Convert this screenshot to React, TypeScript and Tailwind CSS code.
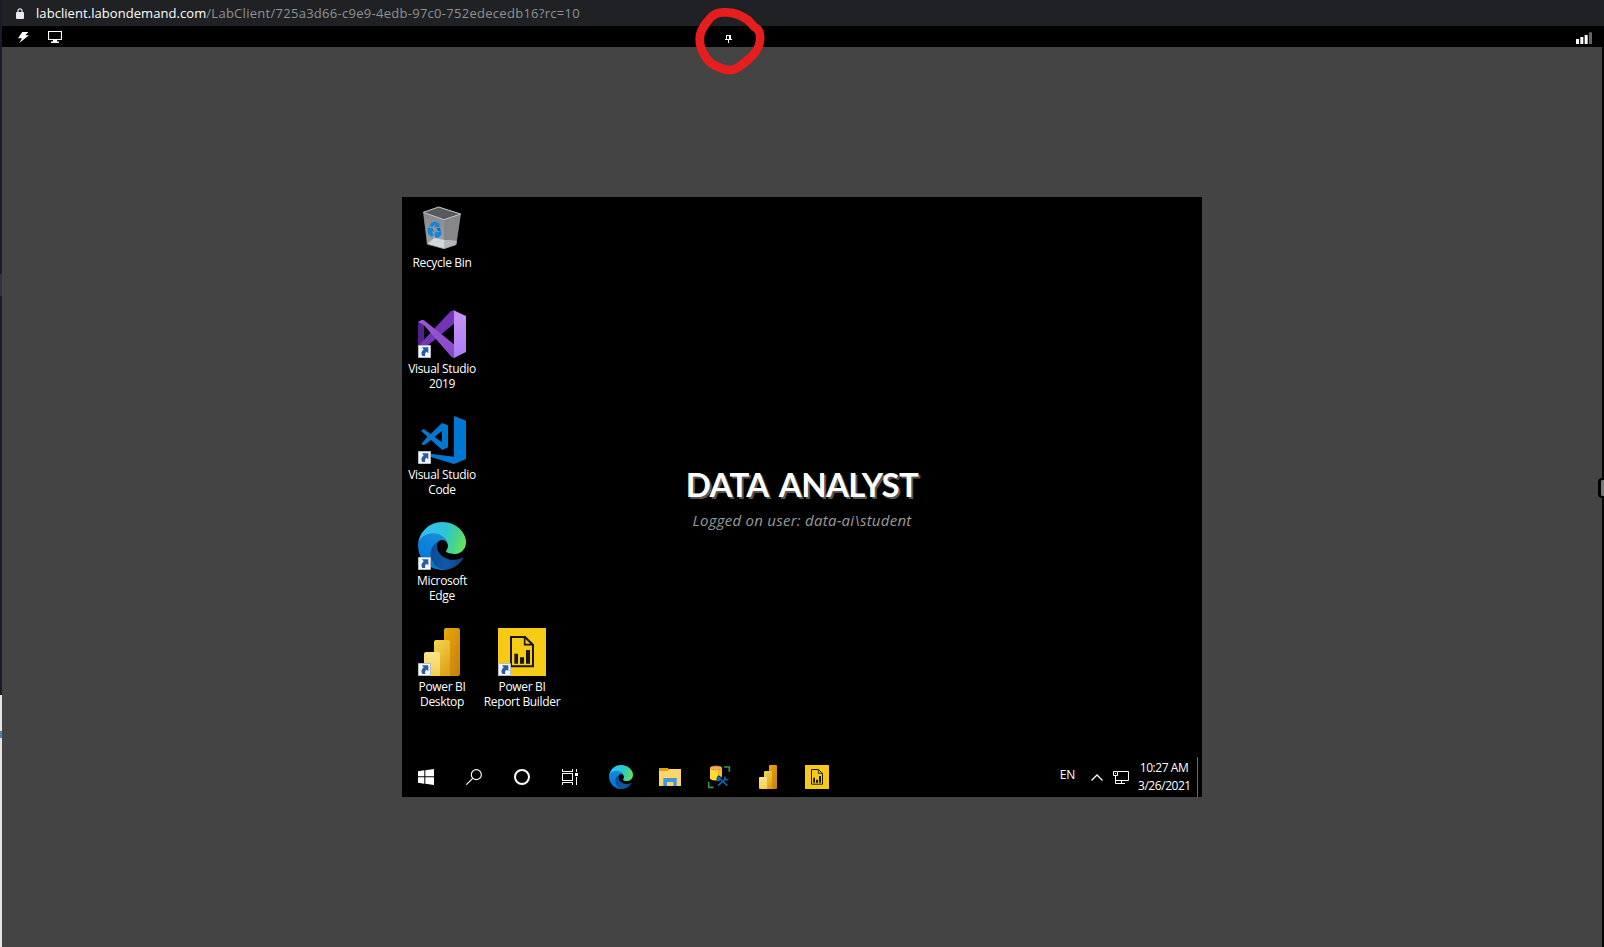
import type { ReactNode } from "react";

function EdgeLogo({ className }: { className: string }) {
  return (
    <svg viewBox="0 0 256 256" className={className}>
      <defs>
        <linearGradient id="edgeNavy" x1="63" y1="177" x2="241" y2="177" gradientUnits="userSpaceOnUse">
          <stop offset="0" stopColor="#0b4a94" />
          <stop offset="0.5" stopColor="#0f59a6" />
          <stop offset="1" stopColor="#163f7c" />
        </linearGradient>
        <linearGradient id="edgeBlue" x1="110" y1="60" x2="50" y2="220" gradientUnits="userSpaceOnUse">
          <stop offset="0" stopColor="#1b8fd2" />
          <stop offset="0.3" stopColor="#1384da" />
          <stop offset="1" stopColor="#0078d7" />
        </linearGradient>
        <linearGradient id="edgeGreen" x1="15" y1="60" x2="245" y2="135" gradientUnits="userSpaceOnUse">
          <stop offset="0" stopColor="#37bdf8" />
          <stop offset="0.5" stopColor="#2cc6d3" />
          <stop offset="0.78" stopColor="#46d48a" />
          <stop offset="1" stopColor="#68e456" />
        </linearGradient>
      </defs>
      <path fill="url(#edgeNavy)" d="M235.68 190.52a93.73 93.73 0 01-10.54 4.71 101.87 101.87 0 01-35.9 6.46c-47.32 0-88.54-32.55-88.54-74.32A31.48 31.48 0 01117.13 100c-42.8 1.8-53.8 46.4-53.8 72.53 0 73.88 68.09 81.37 82.76 81.37 7.91 0 19.84-2.3 27-4.56l1.31-.44a128.34 128.34 0 0066.6-52.8 4 4 0 00-5.32-5.58z" />
      <path fill="url(#edgeBlue)" d="M105.73 241.42a79.2 79.2 0 01-22.74-21.34 80.72 80.72 0 0129.53-120c3.12-1.47 8.45-4.13 15.54-4a32.35 32.35 0 0125.69 13 31.88 31.88 0 016.36 18.66c0-.21 24.46-79.6-80-79.6-43.9 0-80 41.66-80 78.21a130.15 130.15 0 0012.11 56 128 128 0 00156.38 67.11 75.55 75.55 0 01-62.78-8z" />
      <path fill="url(#edgeGreen)" d="M152.33 148.86c-.81 1.05-3.3 2.5-3.3 5.66 0 2.61 1.7 5.12 4.72 7.23 14.38 10 41.49 8.68 41.56 8.68a59.56 59.56 0 0030.27-8.35A61.38 61.38 0 00256 109.19c.26-22.41-8-37.31-11.34-43.91C223.46 23.84 177.72 0 128 0A128 128 0 000 126.2c.48-36.54 36.8-66.05 80-66.05 3.5 0 23.46.34 42 10.07 16.34 8.58 24.9 18.94 30.85 29.21 6.18 10.67 7.28 24.15 7.28 29.52s-2.74 13.33-7.8 19.91z" />
    </svg>
  );
}

function RecycleBin() {
  return (
    <svg viewBox="0 0 144 144" className="size-12">
      <defs>
        <linearGradient id="binLeft" x1="0" y1="0" x2="0" y2="1">
          <stop offset="0" stopColor="#85878b" />
          <stop offset="1" stopColor="#a3a5aa" />
        </linearGradient>
      </defs>
      <path d="M16 25 78 47 78 134 28 121Z" fill="url(#binLeft)" />
      <path d="M128 30 78 47 78 134 114 122Z" fill="#85878b" />
      <path d="M16 25 62 9 128 30 78 47Z" fill="#58595b" />
      <path d="M28 119 50 101 78 108 116 112 114 122 78 134Z" fill="#d3d6dc" />
      <path d="M78 108 116 110 114 122 78 134Z" fill="#b4b7bc" />
      <path d="M16 25 62 9 128 30 78 47Z" fill="none" stroke="#c9cacc" strokeWidth="3" />
      <path d="M17 28 28 121 78 134 114 122 127 32" fill="none" stroke="#8e9094" strokeWidth="2" />
      <g fill="#0f85dc">
        <path d="M40 56 52 52 65 59 65 70 53 70 48 62 44 69 34 66Z" />
        <path d="M29 71 44 73 49 83 42 82 47 95 39 98 29 87Z" />
        <path d="M49 88 57 81 57 85 69 83 70 92 61 101 53 101Z" />
        <path d="M55 72 66 72 69 83 60 81Z" fill="#0a6fc4" />
      </g>
    </svg>
  );
}

function VisualStudio() {
  return (
    <svg viewBox="0 0 144 144" className="size-12">
      <defs>
        <linearGradient id="vsPanel" x1="0" y1="0" x2="0" y2="1">
          <stop offset="0" stopColor="#c793f6" />
          <stop offset="1" stopColor="#ae7cf5" />
        </linearGradient>
        <linearGradient id="vsBand" x1="0" y1="0" x2="1" y2="1">
          <stop offset="0" stopColor="#9a59d8" />
          <stop offset="1" stopColor="#8748c8" />
        </linearGradient>
      </defs>
      <path d="M0 35 18 44 18 100 4 112 0 108Z" fill="#52218f" />
      <path d="M6 114 20 114 108 41 108 0 98 4 8 100Z" fill="#7534b5" />
      <path d="M0 35 11 30Q16 29 20 32L108 103 108 144Q102 143 98 138L18 46Z" fill="url(#vsBand)" />
      <path d="M105 0 144 18 144 126 108 144 108 3Z" fill="url(#vsPanel)" />
    </svg>
  );
}

function VsCode() {
  return (
    <svg viewBox="0 0 144 144" className="size-12" fill="#0078d2">
      <path d="M108 0 144 14 144 129 108 144 36 122 36 113 108 122Z" />
      <path fillRule="evenodd" d="M9 44 17 39 38 54 72 21 90 28 90 94 73 102 39 72 18 88 10 84 28 62ZM72 45 49 62 72 79Z" />
    </svg>
  );
}

function PowerBi({ className }: { className: string }) {
  return (
    <svg viewBox="0 0 144 144" className={className}>
      <defs>
        <linearGradient id="pbBack" x1="0" y1="0" x2="1" y2="1">
          <stop offset="0" stopColor="#e8a90c" />
          <stop offset="1" stopColor="#c67e0b" />
        </linearGradient>
        <linearGradient id="pbMid" x1="0" y1="0" x2="0.5" y2="1">
          <stop offset="0" stopColor="#f6d751" />
          <stop offset="1" stopColor="#dfa41b" />
        </linearGradient>
        <linearGradient id="pbFront" x1="0" y1="0" x2="0" y2="1">
          <stop offset="0" stopColor="#fae58a" />
          <stop offset="1" stopColor="#f2cf55" />
        </linearGradient>
      </defs>
      <rect x="78" y="0" width="48" height="144" rx="6" fill="url(#pbBack)" />
      <path d="M48 42q0-6 6-6h36q6 0 6 6v102H48Z" fill="url(#pbMid)" />
      <path d="M18 78q0-6 6-6h36q6 0 6 6v66H24q-6 0-6-6Z" fill="url(#pbFront)" />
    </svg>
  );
}

function ReportBuilder({ className }: { className: string }) {
  return (
    <svg viewBox="0 0 144 144" className={className}>
      <path fill="#f7cb15" d="M0 0h144v144H0z" />
      <path d="M39 27H81L105 51V115H39Z" fill="none" stroke="#17140a" strokeWidth="6" />
      <path d="M80 27V50H105" fill="none" stroke="#17140a" strokeWidth="5" />
      <path d="M49 77h11v30H49zM66 88h12v19H66zM84 66h12v41H84z" fill="#17140a" />
    </svg>
  );
}

function ShortcutArrow() {
  return (
    <svg viewBox="0 0 39 39" className="absolute bottom-0 left-0 size-[13px]">
      <path d="M1.5 1.5h36v36h-36z" fill="#f5f6f8" stroke="#b9bcc0" strokeWidth="3" />
      <path d="M12 7H31V25L26 20Q19 24 22 33H13Q6 23 17 13Z" fill="#2a5ca5" />
    </svg>
  );
}

function DesktopItem({ icon, lines, shortcut = true }: { icon: ReactNode; lines: string[]; shortcut?: boolean }) {
  return (
    <div className="flex flex-col items-center pt-[7px]">
      <div className="relative size-12">
        {icon}
        {shortcut && <ShortcutArrow />}
      </div>
      <div className="mt-[3px] text-center text-[12px] leading-[15px] tracking-[-0.33px] whitespace-nowrap text-white">
        {lines.map((line) => (
          <div key={line}>{line}</div>
        ))}
      </div>
    </div>
  );
}

function StartIcon() {
  return (
    <svg viewBox="0 0 48 48" className="size-4" fill="#fff">
      <path d="M0 6.500 19 4V22H0ZM22 3.500 48 0V22H22ZM0 25H19V44L0 41.500ZM22 25H48V48L22 44.500Z" />
    </svg>
  );
}

function SearchIcon() {
  return (
    <svg viewBox="0 0 48 48" className="size-4" fill="none" stroke="#fff" strokeWidth="3.500">
      <circle cx="31" cy="17" r="15" />
      <path d="M20 28 1 47" />
    </svg>
  );
}

function TaskViewIcon() {
  return (
    <svg viewBox="0 0 16 16" className="size-4" fill="none" stroke="#fff" shapeRendering="crispEdges">
      <path d="M.5 0V2.500H10.500V0M.5 16V13.500H10.500V16M.5 4.500H10.500V11.500H.5ZM14.500 0V3M14.500 8V16" />
      <path d="M13 4h3v3h-3z" fill="#fff" stroke="none" />
    </svg>
  );
}

function FolderIcon() {
  return (
    <svg viewBox="0 0 72 72" className="size-6">
      <path d="M3 9H30L33 13V22H3Z" fill="#e5a10f" />
      <path d="M3 18H28L33 12H69V63H3Z" fill="#fcd66a" />
      <path d="M16 39H56V63H46V51H27V63H16Z" fill="#3c98e0" />
    </svg>
  );
}

function DataStudioIcon() {
  return (
    <svg viewBox="0 0 72 72" className="ml-0.5 size-6">
      <path d="M6 9V42Q22 51 42 42V9Z" fill="#fddb35" />
      <path d="M30 12H42V42Q36 46 30 46Z" fill="#f8bd18" />
      <ellipse cx="24" cy="9" rx="18" ry="6" fill="#f6ad63" stroke="#e08b30" strokeWidth="2" />
      <path d="M48 6H64V20M2 50V67H17" fill="none" stroke="#3d9346" strokeWidth="5" />
      <path d="M28 36 40 42 59 62M29 64 52 43" fill="none" stroke="#000" strokeWidth="11" />
      <path d="M34 39 58 62M30 62 51 43" fill="none" stroke="#0f65b0" strokeWidth="5" />
      <path d="M24 42 32 34 41 36 36 40 38 45 32 50Z" fill="#0f65b0" />
      <path d="M52 32Q45 38 50 45Q58 49 63 41L56 42 53 39Z" fill="#0f65b0" />
    </svg>
  );
}

function TrayNetworkIcon() {
  return (
    <svg viewBox="0 0 16 13" className="h-[13px] w-4" fill="none" stroke="#fff">
      <path d="M5 .5H15.500V9.500H3M8.500 9.500V12M5 12.500H12M.5 .5H4.500V4.500H.5ZM2.500 5V12.500H5" />
      <path d="M2 2h1v1H2z" fill="#fff" stroke="none" />
    </svg>
  );
}

function TaskCell({ children }: { children: ReactNode }) {
  return <div className="flex w-12 items-center justify-center">{children}</div>;
}

function AppCell({ children }: { children: ReactNode }) {
  return <div className="flex w-[49px] items-center justify-center">{children}</div>;
}

function Taskbar() {
  return (
    <div className="flex h-10 items-stretch justify-between">
      <div className="flex">
        <TaskCell><StartIcon /></TaskCell>
        <TaskCell><SearchIcon /></TaskCell>
        <TaskCell>
          <div className="size-4 rounded-full border-[2.5px] border-white" />
        </TaskCell>
        <TaskCell><TaskViewIcon /></TaskCell>
        <div className="ml-0.5 flex">
          <AppCell><EdgeLogo className="size-6" /></AppCell>
          <AppCell><FolderIcon /></AppCell>
          <AppCell><DataStudioIcon /></AppCell>
          <AppCell><PowerBi className="size-6" /></AppCell>
          <AppCell><ReportBuilder className="size-6" /></AppCell>
        </div>
      </div>
      <div className="flex items-center text-[12px] tracking-[-0.45px] text-white">
        <span className="mr-4 -mt-1 tracking-[-0.2px]">EN</span>
        <svg viewBox="0 0 12 7" className="mr-[10px] h-[7px] w-3" fill="none" stroke="#fff" strokeWidth="1.300">
          <path d="M.5 6.500 6 1 11.500 6.500" />
        </svg>
        <TrayNetworkIcon />
        <div className="ml-[9px] w-[52px] text-center leading-[18px] whitespace-nowrap">
          <div>10:27 AM</div>
          <div>3/26/2021</div>
        </div>
        <div className="mr-1 ml-[7px] h-full w-px bg-[#6b6b6b]" />
      </div>
    </div>
  );
}

function Desktop() {
  return (
    <div className="relative flex h-[600px] w-[800px] flex-col justify-between bg-black">
      <div className="grid grid-flow-col auto-cols-[80px] grid-rows-[repeat(5,106px)] justify-start">
        <DesktopItem icon={<RecycleBin />} lines={["Recycle Bin"]} shortcut={false} />
        <DesktopItem icon={<VisualStudio />} lines={["Visual Studio", "2019"]} />
        <DesktopItem icon={<VsCode />} lines={["Visual Studio", "Code"]} />
        <DesktopItem icon={<EdgeLogo className="size-12" />} lines={["Microsoft", "Edge"]} />
        <DesktopItem icon={<PowerBi className="size-12" />} lines={["Power BI", "Desktop"]} />
        <div className="col-start-2 row-start-5">
          <DesktopItem icon={<ReportBuilder className="size-12" />} lines={["Power BI", "Report Builder"]} />
        </div>
      </div>
      <div className="absolute inset-x-0 top-[267px] text-center whitespace-nowrap">
        <div className="font-[Lato,sans-serif] text-[33px] leading-[40px] font-bold tracking-[-0.6px] text-white [text-shadow:2px_2px_0_#5b5552] [word-spacing:5px]">
          DATA ANALYST
        </div>
        <div className="mt-[5px] text-[15px] leading-[22px] tracking-[0.26px] text-[#9b9b9b] italic">Logged on user: data-ai\student</div>
      </div>
      <Taskbar />
    </div>
  );
}

export default function App() {
  return (
    <div className="relative flex h-[947px] w-[1604px] overflow-hidden bg-[#444444] font-['Open_Sans','Noto_Sans',sans-serif]">
      <div className="flex w-0.5 flex-col">
        <div className="h-[274px] bg-[#1b1a2b]" />
        <div className="h-[22px] bg-[#333240]" />
        <div className="h-[399px] bg-[#1b1a2b]" />
        <div className="h-[36px] bg-[#e4e4e4]" />
        <div className="h-[7px] bg-[#4f83b5]" />
        <div className="flex-1 bg-[#e4e4e4]" />
      </div>
      <div className="flex min-w-0 flex-1 flex-col">
        <div className="flex h-[26px] items-center bg-[#202124] pl-[14px] text-[13px] whitespace-nowrap">
          <svg viewBox="0 0 8 11" className="h-[11px] w-2">
            <path d="M2 5V2.800a2 2 0 0 1 4 0V5" fill="none" stroke="#e8eaed" strokeWidth="1.200" />
            <rect y="4" width="8" height="7" rx="1" fill="#e8eaed" />
          </svg>
          <span className="mt-px ml-3 tracking-[0.06px] text-white">labclient.labondemand.com</span>
          <span className="mt-px tracking-[0.28px] text-[#8f9195]">/LabClient/725a3d66-c9e9-4edb-97c0-752edecedb16?rc=10</span>
        </div>
        <div className="flex h-[21px] items-center bg-black">
          <svg viewBox="0 0 33 33" className="mt-px ml-4 size-[11px]" fill="#fff">
            <path d="M13 0H31L22 10H33L4 33 12 19H0Z" />
          </svg>
          <svg viewBox="0 0 14 12" className="mt-px ml-[19px] h-3 w-[14px]">
            <path d="M.5 .5H13.500V8.500H.5Z" fill="none" stroke="#fff" strokeWidth="1.200" />
            <path d="M5 9h4v1.500h2V12H3v-1.500h2z" fill="#fff" />
          </svg>
          <svg viewBox="0 0 7 8" className="mt-1 ml-[663px] h-2 w-[7px]" fill="#fff" shapeRendering="crispEdges">
            <path d="M1 0H6V4H7V5H4V8H3V5H0V4H1ZM2 1V4H4V1Z" fillRule="evenodd" />
          </svg>
          <svg viewBox="0 0 48 36" className="mt-[3px] mr-3 ml-auto h-3 w-4" fill="#fff">
            <path d="M0 21h9v15H0zM13 15h9v21h-9zM26 9h9v27h-9z" />
            <path d="M39 1h9v35h-9z" fill="#666" />
          </svg>
        </div>
        <div className="flex flex-1">
          <div className="flex flex-1 justify-center pt-[150px]">
            <Desktop />
          </div>
          <div className="w-0.5 bg-[#050505]" />
        </div>
      </div>
      <svg viewBox="0 0 300 240" className="absolute top-0 left-[680px] h-20 w-[100px]" fill="none">
        <path
          d="M135 37C154 36 181 44 202 59C211 65 215 76 228 84C244 93 242 124 236 138C227 165 200 182 182 197C160 213 146 213 127 206C105 197 91 194 77 171C66 155 59 140 59 117C59 91 77 70 91 54C102 41 116 36 135 37Z"
          stroke="#e71e1e"
          strokeWidth="26"
        />
      </svg>
      <div className="absolute top-[478px] right-0 h-5 w-1.5 rounded-l border-y-2 border-l-[3px] border-black bg-[#777777]" />
    </div>
  );
}
